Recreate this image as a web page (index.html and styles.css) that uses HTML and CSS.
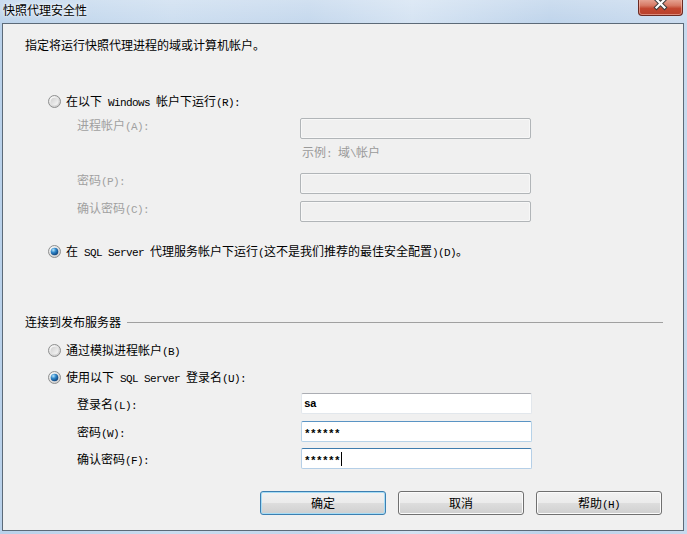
FILE: index.html
```html
<!DOCTYPE html>
<html lang="zh-CN">
<head>
<meta charset="utf-8">
<title>快照代理安全性</title>
<link rel="stylesheet" href="styles.css">
</head>
<body>
<div class="window">
  <div class="titlebar">
    <span class="title">快照代理安全性</span>
    <div class="close">
      <svg width="45" height="17" viewBox="0 0 45 17">
        <path d="M18.5 1.5 L26.5 9.5 M26.5 1.5 L18.5 9.5" stroke="#3b3b3b" stroke-width="4.2" stroke-linecap="square" fill="none"/>
        <path d="M18.5 1.5 L26.5 9.5 M26.5 1.5 L18.5 9.5" stroke="#ffffff" stroke-width="2.2" stroke-linecap="square" fill="none"/>
      </svg>
    </div>
  </div>
  <div class="panel">
    <p class="intro">指定将运行快照代理进程的域或计算机帐户。</p>

    <div class="radio r-win">
      <svg class="rb" width="13" height="13" viewBox="0 0 13 13">
        <defs>
          <radialGradient id="o1" cx="0.35" cy="0.3" r="0.8"><stop offset="0" stop-color="#ffffff"/><stop offset="1" stop-color="#c9c9c9"/></radialGradient>
          <linearGradient id="i1" x1="0" y1="0" x2="1" y2="1"><stop offset="0" stop-color="#cfcfcf"/><stop offset="1" stop-color="#f7f7f7"/></linearGradient>
        </defs>
        <circle cx="6.5" cy="6.5" r="6" fill="url(#o1)" stroke="#8e8f8f"/>
        <circle cx="6.5" cy="6.5" r="3.8" fill="url(#i1)"/>
      </svg>
      <span>在以下<span class="m"> Windows </span>帐户下运行<span class="m">(R):</span></span>
    </div>

    <div class="fields dis">
      <div class="row first">
        <span class="lbl">进程帐户<span class="m">(A):</span></span>
        <div class="box off"></div>
      </div>
      <div class="hint">示例<span class="m">: </span>域<span class="m">\</span>帐户</div>
      <div class="row pw">
        <span class="lbl">密码<span class="m">(P):</span></span>
        <div class="box off"></div>
      </div>
      <div class="row cpw">
        <span class="lbl">确认密码<span class="m">(C):</span></span>
        <div class="box off"></div>
      </div>
    </div>

    <div class="radio r-agent">
      <svg class="rb" width="13" height="13" viewBox="0 0 13 13">
        <defs>
          <radialGradient id="o2" cx="0.35" cy="0.3" r="0.8"><stop offset="0" stop-color="#ffffff"/><stop offset="1" stop-color="#c9c9c9"/></radialGradient>
          <radialGradient id="d2" cx="0.35" cy="0.3" r="0.75"><stop offset="0" stop-color="#b8e6fb"/><stop offset="0.45" stop-color="#2f86c9"/><stop offset="1" stop-color="#0d3f77"/></radialGradient>
        </defs>
        <circle cx="6.5" cy="6.5" r="6" fill="url(#o2)" stroke="#8e8f8f"/>
        <circle cx="6.5" cy="6.5" r="3.8" fill="url(#d2)"/>
      </svg>
      <span>在<span class="m"> SQL Server </span>代理服务帐户下运行<span class="m">(</span>这不是我们推荐的最佳安全配置<span class="m">)(D)</span>。</span>
    </div>

    <div class="section">
      <span>连接到发布服务器</span>
      <span class="rule"></span>
    </div>

    <div class="radio r-imp">
      <svg class="rb" width="13" height="13" viewBox="0 0 13 13">
        <defs>
          <radialGradient id="o3" cx="0.35" cy="0.3" r="0.8"><stop offset="0" stop-color="#ffffff"/><stop offset="1" stop-color="#c9c9c9"/></radialGradient>
          <linearGradient id="i3" x1="0" y1="0" x2="1" y2="1"><stop offset="0" stop-color="#cfcfcf"/><stop offset="1" stop-color="#f7f7f7"/></linearGradient>
        </defs>
        <circle cx="6.5" cy="6.5" r="6" fill="url(#o3)" stroke="#8e8f8f"/>
        <circle cx="6.5" cy="6.5" r="3.8" fill="url(#i3)"/>
      </svg>
      <span>通过模拟进程帐户<span class="m">(B)</span></span>
    </div>

    <div class="radio r-sql">
      <svg class="rb" width="13" height="13" viewBox="0 0 13 13">
        <defs>
          <radialGradient id="o4" cx="0.35" cy="0.3" r="0.8"><stop offset="0" stop-color="#ffffff"/><stop offset="1" stop-color="#c9c9c9"/></radialGradient>
          <radialGradient id="d4" cx="0.35" cy="0.3" r="0.75"><stop offset="0" stop-color="#b8e6fb"/><stop offset="0.45" stop-color="#2f86c9"/><stop offset="1" stop-color="#0d3f77"/></radialGradient>
        </defs>
        <circle cx="6.5" cy="6.5" r="6" fill="url(#o4)" stroke="#8e8f8f"/>
        <circle cx="6.5" cy="6.5" r="3.8" fill="url(#d4)"/>
      </svg>
      <span>使用以下<span class="m"> SQL Server </span>登录名<span class="m">(U):</span></span>
    </div>

    <div class="fields login">
      <div class="row l1">
        <span class="lbl">登录名<span class="m">(L):</span></span>
        <div class="box on"><span class="val">sa</span></div>
      </div>
      <div class="row l2">
        <span class="lbl">密码<span class="m">(W):</span></span>
        <div class="box hover"><span class="val star">******</span></div>
      </div>
      <div class="row l3">
        <span class="lbl">确认密码<span class="m">(F):</span></span>
        <div class="box focus"><span class="val star">******</span><span class="caret"></span></div>
      </div>
    </div>

    <div class="buttons">
      <button class="btn default">确定</button>
      <button class="btn">取消</button>
      <button class="btn">帮助<span class="m">(H)</span></button>
    </div>
  </div>
</div>
</body>
</html>
```

FILE: styles.css
```css
html, body {
  margin: 0;
  padding: 0;
}

body {
  width: 687px;
  height: 534px;
  overflow: hidden;
  font-family: "Noto Sans CJK SC", "Noto Sans", sans-serif;
  font-size: 12px;
  color: #000;
  background: linear-gradient(90deg, #b9d1ea 0%, #cadcef 25%, #c2d6ec 45%, #d3e2f2 60%, #bcd2ea 80%, #c8daee 100%);
}

.window {
  display: flex;
  flex-direction: column;
  height: 534px;
}

.titlebar {
  height: 23px;
  display: flex;
  justify-content: space-between;
  align-items: flex-start;
  background: linear-gradient(180deg, rgba(255,255,255,0.25) 0%, rgba(255,255,255,0.05) 100%);
}

.title {
  margin: 2px 0 0 3px;
  line-height: 16px;
  font-size: 12px;
  text-shadow: 0 0 6px rgba(255,255,255,0.9), 0 0 3px rgba(255,255,255,0.9);
}

.close {
  width: 45px;
  height: 17px;
  margin: -1px 4px 0 0;
  box-sizing: border-box;
  border: 1px solid #6b2a22;
  border-top: none;
  border-radius: 0 0 4px 4px;
  background: linear-gradient(180deg, #e8a999 0%, #d77a65 40%, #c2462f 60%, #b8412c 100%);
  box-shadow: inset 0 0 0 1px rgba(255,210,200,0.5);
}

.close svg {
  display: block;
  margin: -1px 0 0 -1px;
}

.panel {
  height: 508px;
  margin: 0 3px 0 2px;
  box-sizing: border-box;
  border: 1px solid #5c6a78;
  background: #f0f0f0;
  padding-top: 13px;
}

.m {
  font-family: "Liberation Mono", "DejaVu Sans Mono", monospace;
  font-size: 11px;
  letter-spacing: -0.6px;
  line-height: 1;
  white-space: pre;
}

.intro {
  margin: 0 0 0 22px;
  line-height: 16px;
  height: 16px;
}

.radio {
  display: flex;
  align-items: center;
  height: 16px;
  line-height: 16px;
  padding-left: 45px;
  gap: 5px;
}

.rb {
  display: block;
  flex: none;
}

.r-win { margin-top: 40px; }
.r-agent { margin-top: 21px; }
.r-imp { margin-top: 12px; }
.r-sql { margin-top: 11px; }

.row {
  display: flex;
  padding-left: 74px;
  height: 21px;
}

.lbl {
  width: 223px;
  flex: none;
}

.box {
  width: 231px;
  height: 21px;
  box-sizing: border-box;
  border-radius: 2px;
  display: flex;
  align-items: center;
  padding-left: 2px;
}

.dis .row { align-items: flex-start; }
.dis .lbl { line-height: 14px; height: 14px; color: #a0a0a0; }
.dis .first { margin-top: 9px; }
.dis .pw { margin-top: 13px; }
.dis .cpw { margin-top: 7px; }

.hint {
  margin-top: 5px;
  padding-left: 299px;
  line-height: 16px;
  height: 16px;
  color: #9a9a9a;
}

.box.off {
  border: 1px solid #b1b5b8;
  background: #f0f0f0;
  box-shadow: inset 0 0 0 1px #f7f7f7;
}

.box.on {
  background: #fff;
  border: 1px solid #e2e7ec;
  border-top-color: #abadb3;
}

.box.hover {
  background: #fff;
  border: 1px solid #b6d2e8;
  border-top-color: #5a94c4;
}

.box.focus {
  background: #fff;
  border: 1px solid #b5cfe7;
  border-top-color: #3d7bad;
}

.section {
  margin-top: 55px;
  display: flex;
  align-items: center;
  height: 16px;
  line-height: 16px;
  padding-left: 22px;
  padding-right: 20px;
}

.rule {
  flex: 1;
  height: 1px;
  margin-left: 6px;
  background: #a0a0a0;
}

.login .row { align-items: center; }
.login .lbl { width: 224px; line-height: 16px; height: 16px; }
.login .l1 { margin-top: 8px; }
.login .l2 { margin-top: 7px; }
.login .l3 { margin-top: 6px; }

.val {
  font-family: "Liberation Mono", "DejaVu Sans Mono", monospace;
  font-size: 11px;
  letter-spacing: -0.6px;
  font-weight: bold;
  line-height: 14px;
}

.star {
  position: relative;
  top: 2px;
}

.caret {
  width: 1px;
  height: 14px;
  background: #000;
  margin-left: 1px;
}

.buttons {
  margin-top: 22px;
  display: flex;
  justify-content: flex-end;
  gap: 12px;
  padding-right: 21px;
}

.btn {
  width: 126px;
  height: 24px;
  box-sizing: border-box;
  margin: 0;
  padding: 0;
  font-family: "Noto Sans CJK SC", sans-serif;
  font-size: 12px;
  line-height: 16px;
  color: #000;
  border: 1px solid #707070;
  border-radius: 3px;
  background: linear-gradient(180deg, #f2f2f2 0%, #ebebeb 48%, #dddddd 52%, #cfcfcf 100%);
  box-shadow: inset 0 0 0 1px #fbfbfb;
}

.btn.default {
  border-color: #3c7fb1;
  box-shadow: inset 0 0 0 1px #a6dcf5;
}
```
